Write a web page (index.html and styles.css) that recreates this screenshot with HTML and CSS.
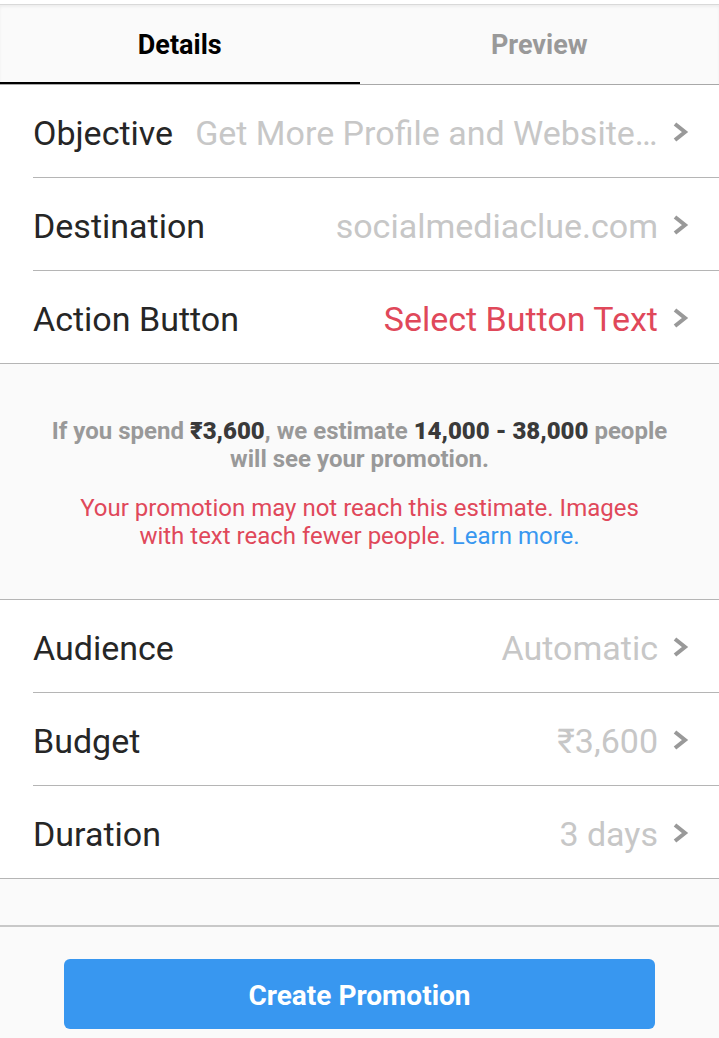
FILE: index.html
```html
<!DOCTYPE html>
<html lang="en">
<head>
<meta charset="utf-8">
<title>Create Promotion</title>
<link rel="stylesheet" href="styles.css">
</head>
<body>
<div class="page">
  <div class="top-gap"></div>
  <nav class="tabs">
    <div class="tab active">Details</div>
    <div class="tab">Preview</div>
  </nav>

  <section class="group">
    <div class="row">
      <div class="row-inner">
        <span class="label">Objective</span>
        <span class="value ellipsis">Get More Profile and Website…</span>
        <svg class="chev" viewBox="0 0 17 22" width="17" height="22"><polyline points="3,3 13,11 3,19" fill="none" stroke="#999" stroke-width="4"/></svg>
      </div>
    </div>
    <div class="row">
      <div class="row-inner">
        <span class="label">Destination</span>
        <span class="value">socialmediaclue.com</span>
        <svg class="chev" viewBox="0 0 17 22" width="17" height="22"><polyline points="3,3 13,11 3,19" fill="none" stroke="#999" stroke-width="4"/></svg>
      </div>
    </div>
    <div class="row">
      <div class="row-inner">
        <span class="label">Action Button</span>
        <span class="value red">Select Button Text</span>
        <svg class="chev" viewBox="0 0 17 22" width="17" height="22"><polyline points="3,3 13,11 3,19" fill="none" stroke="#999" stroke-width="4"/></svg>
      </div>
    </div>
  </section>

  <section class="info">
    <p class="estimate">If you spend <b>₹3,600</b>, we estimate <b>14,000 - 38,000</b> people will see your promotion.</p>
    <p class="warning">Your promotion may not reach this estimate. Images with text reach fewer people. <a class="link" href="#">Learn more.</a></p>
  </section>

  <section class="group">
    <div class="row">
      <div class="row-inner">
        <span class="label">Audience</span>
        <span class="value">Automatic</span>
        <svg class="chev" viewBox="0 0 17 22" width="17" height="22"><polyline points="3,3 13,11 3,19" fill="none" stroke="#999" stroke-width="4"/></svg>
      </div>
    </div>
    <div class="row">
      <div class="row-inner">
        <span class="label">Budget</span>
        <span class="value">₹3,600</span>
        <svg class="chev" viewBox="0 0 17 22" width="17" height="22"><polyline points="3,3 13,11 3,19" fill="none" stroke="#999" stroke-width="4"/></svg>
      </div>
    </div>
    <div class="row">
      <div class="row-inner">
        <span class="label">Duration</span>
        <span class="value">3 days</span>
        <svg class="chev" viewBox="0 0 17 22" width="17" height="22"><polyline points="3,3 13,11 3,19" fill="none" stroke="#999" stroke-width="4"/></svg>
      </div>
    </div>
  </section>

  <div class="spacer"></div>

  <footer class="footer">
    <button class="cta" type="button">Create Promotion</button>
  </footer>
</div>
</body>
</html>
```
FILE: styles.css
```css
* { box-sizing: border-box; }
html, body {
  margin: 0;
  padding: 0;
  background: #fafafa;
}
body {
  font-family: Roboto, "Noto Sans", "DejaVu Sans", sans-serif;
  color: #262626;
}
.page {
  width: 719px;
  min-height: 1038px;
  background: #fafafa;
}
.top-gap {
  height: 4px;
  background: #ffffff;
}
.tabs {
  display: grid;
  grid-template-columns: 1fr 1fr;
  background: #fafafa;
  border-top: 1px solid #d9d9d9;
  border-bottom: 1px solid #a8a8a8;
  box-shadow: inset 0 2px 3px rgba(0,0,0,0.05);
}
.tab {
  height: 79px;
  display: flex;
  align-items: center;
  justify-content: center;
  font-size: 27px;
  font-weight: 700;
  color: #999999;
  border-bottom: 2px solid transparent;
  padding-top: 2px;
}
.tab.active {
  color: #000000;
  border-bottom-color: #000000;
}
.group {
  background: #ffffff;
  border-bottom: 1px solid #b5b5b5;
}
.info + .group {
  border-top: 1px solid #b5b5b5;
}
.row {
  padding-left: 33px;
}
.row-inner {
  height: 93px;
  display: flex;
  align-items: center;
  padding-right: 30px;
  padding-top: 3px;
  border-bottom: 1px solid #b5b5b5;
}
.row:last-child .row-inner {
  height: 92px;
  border-bottom: none;
}
.label {
  font-size: 34px;
  color: #262626;
  white-space: nowrap;
  flex: none;
}
.value {
  flex: 1;
  min-width: 0;
  text-align: right;
  font-size: 34px;
  color: #c7c7c7;
  white-space: nowrap;
  margin-left: 22px;
}
.ellipsis {
  overflow: hidden;
  text-align: left;
}
.value.red { color: #e0485a; }
.chev {
  flex: none;
  margin-left: 14px;
  margin-top: -2px;
}
.info {
  background: #fafafa;
  padding: 53px 44px 49px;
  text-align: center;
  font-size: 24px;
  line-height: 28px;
}
.info p { margin: 0; }
.estimate {
  color: #999999;
  font-weight: 700;
}
.estimate b { color: #3a3a3a; }
.warning {
  margin: 21px auto 0 !important;
  max-width: 580px;
  color: #e0485a;
}
.link {
  color: #3897f0;
  text-decoration: none;
}
.spacer {
  height: 48px;
  background: #fafafa;
  border-bottom: 2px solid #c8c8c8;
}
.footer {
  padding: 32px 64px 0;
  background: #fafafa;
}
.cta {
  display: block;
  width: 591px;
  height: 70px;
  border: none;
  border-radius: 6px;
  background: #3897f0;
  color: #ffffff;
  font-family: Roboto, "Noto Sans", sans-serif;
  font-size: 28px;
  font-weight: 700;
  padding: 0;
  padding-top: 3px;
}
```
